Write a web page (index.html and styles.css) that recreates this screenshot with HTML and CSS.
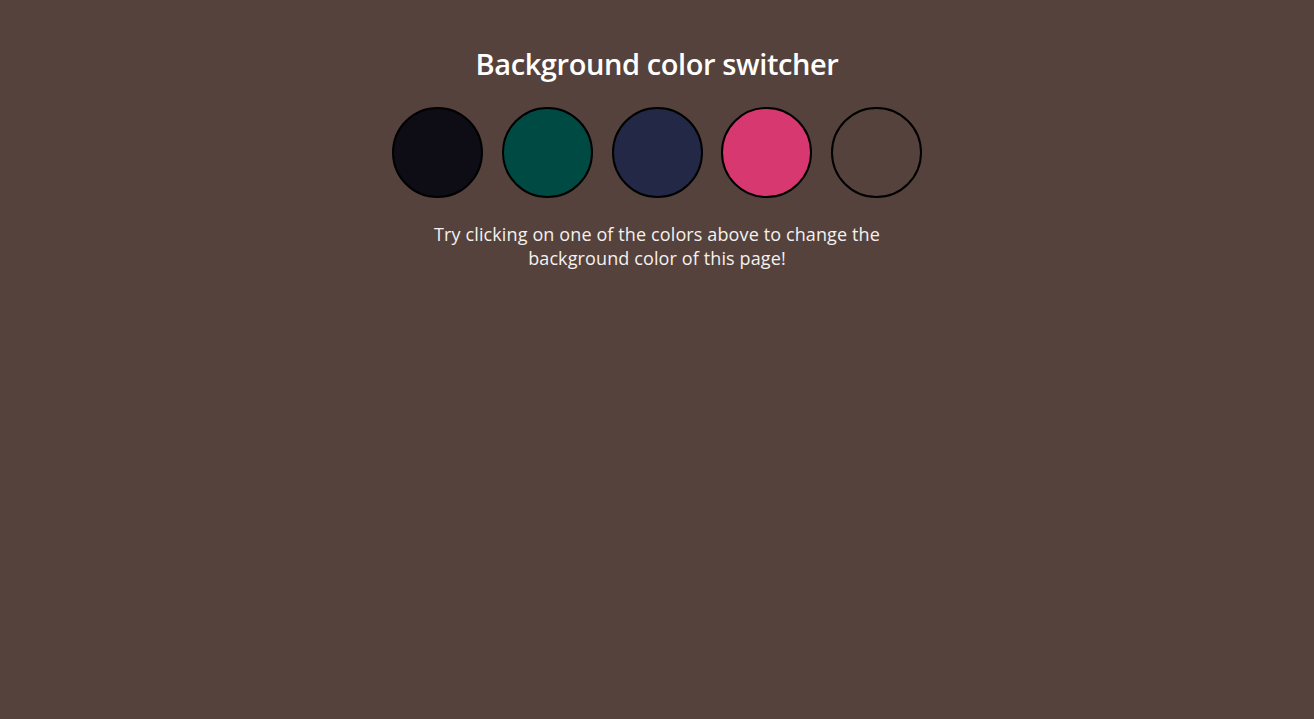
FILE: index.html
```html
<!DOCTYPE html>
<html lang="en">
<head>
<meta charset="utf-8">
<title>Background color switcher</title>
<link rel="stylesheet" href="styles.css">
</head>
<body>
<main class="switcher">
  <h1 class="title">Background color switcher</h1>
  <div class="swatches">
    <button class="swatch swatch-black" aria-label="Black"></button>
    <button class="swatch swatch-teal" aria-label="Teal"></button>
    <button class="swatch swatch-navy" aria-label="Navy"></button>
    <button class="swatch swatch-pink" aria-label="Pink"></button>
    <button class="swatch swatch-brown" aria-label="Brown"></button>
  </div>
  <p class="hint">Try clicking on one of the colors above to change the background color of this page!</p>
</main>
</body>
</html>
```

FILE: styles.css
```css
html, body {
  margin: 0;
  padding: 0;
}
body {
  background: #55423c;
  color: #ffffff;
  font-family: "Open Sans", "Noto Sans", sans-serif;
  min-height: 719px;
}
.switcher {
  display: flex;
  flex-direction: column;
  align-items: center;
  padding-top: 43px;
}
.title {
  margin: 0;
  font-size: 29px;
  font-weight: 600;
  line-height: 42px;
  letter-spacing: -0.4px;
}
.swatches {
  display: flex;
  gap: 18.75px;
  margin-top: 22px;
}
.swatch {
  width: 91px;
  height: 91px;
  box-sizing: border-box;
  border: 2px solid #000;
  border-radius: 50%;
  padding: 0;
  cursor: pointer;
}
.swatch-black { background: #0e0d15; }
.swatch-teal { background: #004a44; }
.swatch-navy { background: #232846; }
.swatch-pink { background: #d83870; }
.swatch-brown { background: #55423c; }
.hint {
  margin: 24px 0 0;
  max-width: 470px;
  text-align: center;
  font-size: 18px;
  line-height: 24px;
  letter-spacing: 0.12px;
  color: #f4f1ef;
}
```
